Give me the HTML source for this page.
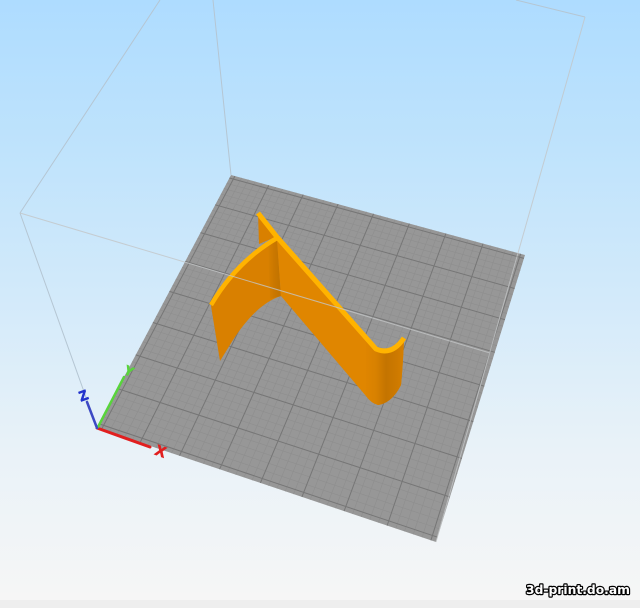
<!DOCTYPE html>
<html><head><meta charset="utf-8"><style>
html,body{margin:0;padding:0;width:640px;height:608px;overflow:hidden;background:#f3f5f6}
svg{display:block}
</style></head><body>
<svg id="s" width="640" height="608" viewBox="0 0 640 608" xmlns="http://www.w3.org/2000/svg">
<defs>
<linearGradient id="bg" gradientUnits="userSpaceOnUse" x1="0" y1="0" x2="0" y2="600">
<stop offset="0" stop-color="#aedcff"/><stop offset=".25" stop-color="#bfe3fc"/><stop offset=".5" stop-color="#d3eafa"/><stop offset=".75" stop-color="#e9f2f8"/><stop offset="1" stop-color="#f6f6f6"/>
</linearGradient>
<linearGradient id="w1" gradientUnits="userSpaceOnUse" x1="266" y1="0" x2="285" y2="0">
<stop offset="0" stop-color="#dc8300"/><stop offset=".4" stop-color="#cb7800"/><stop offset=".7" stop-color="#c27300"/><stop offset="1" stop-color="#dc8300"/>
</linearGradient>
<linearGradient id="w2" gradientUnits="userSpaceOnUse" x1="366" y1="0" x2="406" y2="0">
<stop offset="0" stop-color="#df8500"/><stop offset=".25" stop-color="#d88100"/><stop offset=".5" stop-color="#c47400"/><stop offset=".75" stop-color="#cc7900"/><stop offset="1" stop-color="#d98100"/>
</linearGradient>
</defs>
<rect width="640" height="600" fill="url(#bg)"/>
<rect y="600" width="640" height="8" fill="#eeeeee"/>

<g fill="none" stroke="#b5c6d3" stroke-width="1">
<path d="M20 213L160 0M20 213L97 428M213 0L231 175M516 0L585 17"/>
</g>

<polygon points="231,175 525,255 436,542 97,428" fill="#979797"/>
<g id="grid" fill="none" style="filter:blur(.35px)"></g>

<polygon points="258,213 259,244 278,236" fill="#d98000"/>
<path d="M211,306 Q236,262 277,238 L281,296 C262,302 246,320 233,340 L220,361 Z" fill="#d98000"/>
<path d="M268,243 L277,238 L281,296 L270,299 Z" fill="url(#w1)"/>
<path d="M277,240 L376,351 Q392,354 404,339 Q403,365 401,385 Q392,403 378,405 Q371,403 366,396 L281,296 Z" fill="#e08600"/>
<path d="M366,341 L376,351 Q392,354 404,339 Q403,365 401,385 Q392,403 378,405 Q371,403 366,396 Z" fill="url(#w2)"/>
<g fill="none" stroke="#ffb300" stroke-linecap="butt" stroke-linejoin="round">
<path stroke-width="5" d="M258,213 L277,237 L376,349 Q392,356 404,338"/>
<path stroke-width="4.5" d="M211,305 Q236,262 277,238"/>
</g>

<g fill="none" stroke="#c3c6c7" stroke-width="1" stroke-opacity=".8">
<path d="M20 213L490 353M585 17L436 542"/>
</g>

<g fill="none" stroke-linecap="round">
<path d="M97 428L150 447" stroke="#e11f1f" stroke-width="3"/>
<path d="M98 427L124 377" stroke="#58d43c" stroke-width="2.5"/>
<path d="M97 428L87 402" stroke="#3d49c4" stroke-width="2.5"/>
</g>
<g font-family="'Liberation Sans',sans-serif" font-weight="700" font-size="15" text-anchor="middle" stroke-width=".8">
<text transform="translate(159 456) rotate(20)" fill="#e11f1f" stroke="#e11f1f">X</text>
<text transform="translate(127 375) rotate(25)" fill="#58d43c" stroke="#58d43c" font-size="13">Y</text>
<text transform="translate(85 400) rotate(-20)" fill="#2233cc" stroke="#2233cc" font-size="14">Z</text>
</g>

<text x="526" y="594" textLength="104" lengthAdjust="spacingAndGlyphs" font-family="'DejaVu Sans','Liberation Sans',sans-serif" font-weight="700" font-size="12.5" fill="#fff" stroke="#000" stroke-width="2.4" paint-order="stroke" stroke-linejoin="round">3d-print.do.am</text>
</svg>
<script>
(function(){
var p0=[97,428],p1=[436,542],p2=[525,255],p3=[231,175];
var dx1=p1[0]-p2[0],dy1=p1[1]-p2[1],dx2=p3[0]-p2[0],dy2=p3[1]-p2[1];
var sx=p0[0]-p1[0]+p2[0]-p3[0],sy=p0[1]-p1[1]+p2[1]-p3[1];
var d=dx1*dy2-dx2*dy1;
var g=(sx*dy2-dx2*sy)/d,h=(dx1*sy-sx*dy1)/d;
var a=p1[0]-p0[0]+g*p1[0],b=p3[0]-p0[0]+h*p3[0],c=p0[0];
var e=p1[1]-p0[1]+g*p1[1],f=p3[1]-p0[1]+h*p3[1],i=p0[1];
function P(u,v){var w=g*u+h*v+1;return ((a*u+b*v+c)/w).toFixed(1)+' '+((e*u+f*v+i)/w).toFixed(1);}
var m=0.014,n=8,sub=5,minor='',major='';
for(var k=0;k<=n*sub;k++){
 var t=m+(1-2*m)*k/(n*sub);
 var s='M'+P(t,0)+'L'+P(t,1)+'M'+P(0,t)+'L'+P(1,t);
 if(k%sub==0)major+=s;else minor+=s;
}
var G=document.getElementById('grid'),NS='http://www.w3.org/2000/svg';
function add(dv,col,w){var x=document.createElementNS(NS,'path');x.setAttribute('d',dv);x.setAttribute('stroke',col);x.setAttribute('stroke-width',w);G.appendChild(x);}
add(minor,'#8e8e8e','.6');
add(major,'#767676','1');
})();
</script>
</body></html>
